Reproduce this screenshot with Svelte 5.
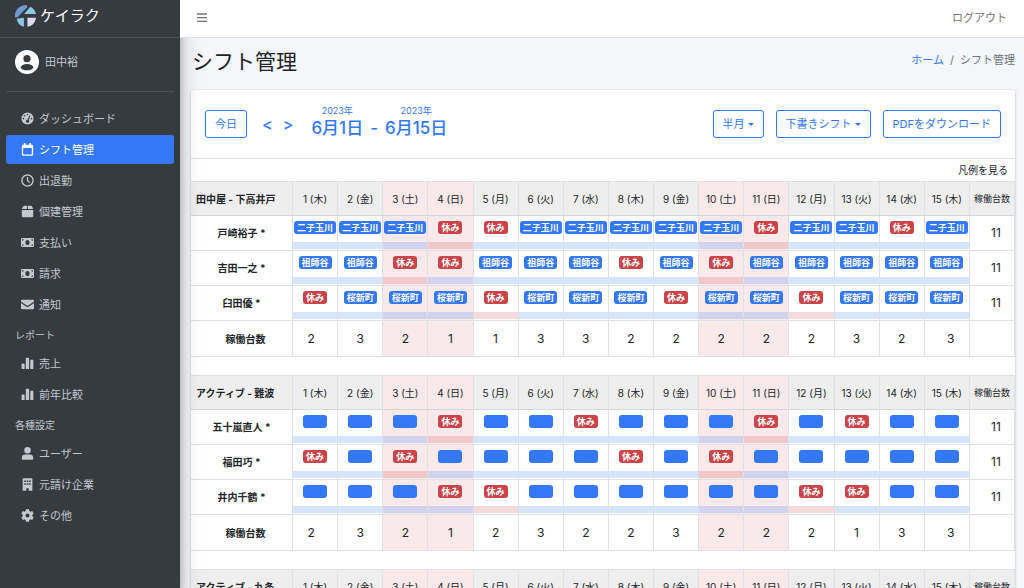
<script>
  const icons = {
    gauge: 'M8 .5a7.5 7.5 0 1 0 0 15 7.5 7.5 0 0 0 0-15zM8 2a1 1 0 1 1 0 2 1 1 0 0 1 0-2zM4.4 3.6a1 1 0 1 1 0 2 1 1 0 0 1 0-2zM3 7.2a1 1 0 1 1 0 2 1 1 0 0 1 0-2zM13 7.2a1 1 0 1 1 0 2 1 1 0 0 1 0-2zM10.6 4l1.1.6-2.2 5.2a2 2 0 1 1-1.3-.5z',
    calendar: 'M3.500 0h2.200v2h4.600V0h2.200v2h.8A1.700 1.700 0 0 1 15 3.700v10.300a1.700 1.700 0 0 1-1.700 1.700H2.700A1.700 1.700 0 0 1 1 14V3.700A1.700 1.700 0 0 1 2.700 2h.8zM2.700 6v7.500a.5.5 0 0 0 .5.5h9.600a.5.5 0 0 0 .5-.5V6z',
    clock: 'M8 .3a7.700 7.700 0 1 0 0 15.400A7.700 7.700 0 0 0 8 .3zM8 2a6 6 0 1 1 0 12A6 6 0 0 1 8 2zM7.200 3.800h1.600v4l2.500 1.900-1 1.300-3.100-2.400z',
    box: 'M4 1h3.500v4H1l1.300-3A1.700 1.700 0 0 1 4 1zM8.500 1H12a1.700 1.700 0 0 1 1.700 1L15 5H8.500zM1 6h14v7.500a1.500 1.500 0 0 1-1.500 1.500h-11A1.500 1.500 0 0 1 1 13.500z',
    bill: 'M1.200 2.500h13.600A1.200 1.200 0 0 1 16 3.700v8.600a1.200 1.200 0 0 1-1.200 1.200H1.200A1.200 1.200 0 0 1 0 12.300V3.700a1.200 1.200 0 0 1 1.200-1.200zM8 4.800c-1.500 0-2.600 1.400-2.600 3.200s1.100 3.200 2.600 3.200 2.600-1.400 2.600-3.200S9.500 4.800 8 4.800zM1.300 3.900v2a2 2 0 0 0 2-2zM12.700 3.900a2 2 0 0 0 2 2v-2zM1.300 10.100v2h2a2 2 0 0 0-2-2zM14.700 10.100a2 2 0 0 0-2 2h2z',
    mail: 'M1.500 2.300h13A1.300 1.300 0 0 1 16 3.700v.7L9.400 9a2.400 2.400 0 0 1-2.800 0L0 4.400v-.7a1.300 1.300 0 0 1 1.500-1.400zM0 6l5.800 4.200a3.700 3.700 0 0 0 4.400 0L16 6v6.500a1.300 1.300 0 0 1-1.500 1.400h-13A1.300 1.300 0 0 1 0 12.500z',
    chart: 'M1.500 8h2.200a.8.8 0 0 1 .8.8V14a.8.8 0 0 1-.8.8H1.500a.8.8 0 0 1-.8-.8V8.800a.8.8 0 0 1 .8-.8zM6.700 1h2.500a.8.8 0 0 1 .8.8V14a.8.8 0 0 1-.8.8H6.700a.8.8 0 0 1-.8-.8V1.800a.8.8 0 0 1 .8-.8zM12.200 3.500h2.200a.8.8 0 0 1 .8.8V14a.8.8 0 0 1-.8.8h-2.200a.8.8 0 0 1-.8-.8V4.300a.8.8 0 0 1 .8-.8z',
    user: 'M8 0a4 4 0 1 1 0 8 4 4 0 0 1 0-8zM5.300 9.300h5.400a4.300 4.300 0 0 1 4.300 4.300v1.100a1 1 0 0 1-1 1H2a1 1 0 0 1-1-1v-1.100a4.300 4.300 0 0 1 4.300-4.300z',
    building: 'M3 .3h10a1 1 0 0 1 1 1V15a.8.8 0 0 1-.8.8H9.500V12.500h-3v3.300H2.800A.8.8 0 0 1 2 15V1.300a1 1 0 0 1 1-1zM4 3v1.800h2V3zM7 3v1.800h2V3zM10 3v1.800h2V3zM4 6.500v1.800h2V6.500zM7 6.500v1.800h2V6.500zM10 6.500v1.800h2V6.500z',
    gear: 'M6.200.3h3.600l.5 2.200 1.300.8 2.200-.7 1.800 3.100L13.900 7.200v1.600l1.700 1.500-1.800 3.100-2.200-.7-1.300.8-.5 2.200H6.200l-.5-2.200-1.300-.8-2.200.7L.4 10.300l1.700-1.500V7.200L.4 5.700l1.800-3.100 2.200.7 1.300-.8zM8 5.500a2.500 2.500 0 1 0 0 5 2.500 2.500 0 0 0 0-5z',
  };

  const menu = [
    {
      items: [
        { icon: 'gauge', label: 'ダッシュボード' },
        { icon: 'calendar', label: 'シフト管理', active: true },
        { icon: 'clock', label: '出退勤' },
        { icon: 'box', label: '個建管理' },
        { icon: 'bill', label: '支払い' },
        { icon: 'bill', label: '請求' },
        { icon: 'mail', label: '通知' },
      ],
    },
    {
      title: 'レポート',
      items: [
        { icon: 'chart', label: '売上' },
        { icon: 'chart', label: '前年比較' },
      ],
    },
    {
      title: '各種設定',
      items: [
        { icon: 'user', label: 'ユーザー' },
        { icon: 'building', label: '元請け企業' },
        { icon: 'gear', label: 'その他' },
      ],
    },
  ];

  // 2023-06-01 is a Thursday
  const weekdays = ['木', '金', '土', '日', '月', '火', '水'];
  const days = Array.from({ length: 15 }, (_, i) => {
    const weekday = weekdays[i % 7];
    return { day: i + 1, weekday, weekend: weekday === '土' || weekday === '日' };
  });

  // off: days without a shift, wish: days off the driver asked for
  const groups = [
    {
      name: '田中屋 - 下高井戸',
      drivers: [
        { name: '戸崎裕子', area: '二子玉川', off: [4, 5, 11, 14], wish: [4, 11] },
        { name: '吉田一之', area: '祖師谷', off: [3, 4, 8, 10], wish: [3, 10] },
        { name: '臼田優', area: '桜新町', off: [1, 5, 9, 12], wish: [5, 12] },
      ],
      totals: [2, 3, 2, 1, 1, 3, 3, 2, 2, 2, 2, 2, 3, 2, 3],
    },
    {
      name: 'アクティブ - 難波',
      drivers: [
        { name: '五十嵐直人', area: '', off: [4, 7, 11, 13], wish: [4, 11] },
        { name: '福田巧', area: '', off: [1, 3, 8, 10], wish: [3, 10] },
        { name: '井内千鶴', area: '', off: [4, 5, 12, 13], wish: [5, 12] },
      ],
      totals: [2, 3, 2, 1, 2, 3, 2, 2, 3, 2, 2, 2, 1, 3, 3],
    },
    { name: 'アクティブ - 九条', drivers: [], totals: [] },
  ];
</script>

<div class="app">
  <aside class="sidebar">
    <a class="brand" href="/">
      <svg class="logo" viewBox="0 0 64 66" aria-hidden="true">
        <path fill="#7397cf" d="M0 37A33 33 0 0 1 37 0v6L8 37z" />
        <path fill="#8cc9e6" d="M47 5A33 33 0 0 1 64 27H28z" />
        <path fill="#8cc9e6" d="M5 41l22-3v28A33 33 0 0 1 5 41z" />
        <path fill="#dcd9ee" d="M38 38h26a33 33 0 0 1-26 28z" />
      </svg>
      <span>ケイラク</span>
    </a>
    <div class="user">
      <svg class="avatar" viewBox="0 0 24 24" aria-hidden="true">
        <circle cx="12" cy="12" r="12" fill="#fff" />
        <circle cx="12" cy="8.700" r="3.600" fill="#363b3f" />
        <ellipse cx="12" cy="17.200" rx="6.200" ry="3.100" fill="#363b3f" />
      </svg>
      <a href="/profile">田中裕</a>
    </div>
    <nav>
      {#each menu as section}
        {#if section.title}
          <h2>{section.title}</h2>
        {/if}
        <ul>
          {#each section.items as item}
            <li>
              <a class="nav-link" class:active={item.active} href="#top">
                <svg class="icon" viewBox="0 0 16 16" aria-hidden="true">
                  <path fill="currentColor" fill-rule="evenodd" d={icons[item.icon]} />
                </svg>
                {item.label}
              </a>
            </li>
          {/each}
        </ul>
      {/each}
    </nav>
  </aside>

  <div class="main">
    <header class="topbar">
      <button class="burger" aria-label="メニュー">
        <svg viewBox="0 0 10 10" aria-hidden="true">
          <path stroke="currentColor" stroke-width="1.300" d="M0 1h10M0 4.700h10M0 8.400h10" />
        </svg>
      </button>
      <a class="logout" href="/logout">ログアウト</a>
    </header>

    <main>
      <div class="page-head">
        <h1>シフト管理</h1>
        <div class="crumbs">
          <a href="/">ホーム</a>
          <span>/</span>
          <span>シフト管理</span>
        </div>
      </div>

      <section class="card">
        <div class="toolbar">
          <button class="btn">今日</button>
          <div class="arrows">
            <button class="arrow">&lt;</button>
            <button class="arrow">&gt;</button>
          </div>
          <div class="range">
            <div class="date"><small>2023年</small>6月1日</div>
            <span>-</span>
            <div class="date"><small>2023年</small>6月15日</div>
          </div>
          <div class="actions">
            <button class="btn">半月<i class="caret"></i></button>
            <button class="btn">下書きシフト<i class="caret"></i></button>
            <button class="btn">PDFをダウンロード</button>
          </div>
        </div>

        <div class="legend"><a href="#legend">凡例を見る</a></div>

        {#each groups as group}
          <table>
            <colgroup>
              <col class="name-col" />
              <col span="16" />
            </colgroup>
            <thead>
              <tr>
                <th class="group">{group.name}</th>
                {#each days as d}
                  <th class:weekend={d.weekend}>{d.day} ({d.weekday})</th>
                {/each}
                <th class="count-head">稼働台数</th>
              </tr>
            </thead>
            <tbody>
              {#each group.drivers as driver}
                <tr>
                  <th>{driver.name} *</th>
                  {#each days as d}
                    {@const off = driver.off.includes(d.day)}
                    <td class="shift" class:weekend={d.weekend}>
                      <span class="badge" class:off>{off ? '休み' : driver.area}</span>
                      <div class="bar" class:wish={driver.wish.includes(d.day)}></div>
                    </td>
                  {/each}
                  <td class="count">11</td>
                </tr>
              {/each}
            </tbody>
            {#if group.totals.length}
              <tfoot>
                <tr>
                  <th>稼働台数</th>
                  {#each group.totals as total, i}
                    <td class:weekend={days[i].weekend}>{total}</td>
                  {/each}
                  <td></td>
                </tr>
              </tfoot>
            {/if}
          </table>
        {/each}
      </section>
    </main>
  </div>
</div>

<style>
  :global(body) {
    margin: 0;
    background: #f4f6f9;
  }

  .app {
    display: flex;
    height: 100vh;
    overflow: hidden;
    font-family: Inter, 'Noto Sans CJK JP', sans-serif;
    font-size: 11px;
    line-height: 16px;
    color: #212529;
  }

  * {
    box-sizing: border-box;
  }

  a {
    color: inherit;
    text-decoration: none;
  }

  button {
    padding: 0;
    border: 0;
    background: none;
    font: inherit;
    color: inherit;
  }

  /* sidebar */
  .sidebar {
    position: relative;
    z-index: 1;
    flex: 0 0 180px;
    background: #363b3f;
    color: #c2c7d0;
    box-shadow: 0 10px 20px rgba(0, 0, 0, 0.25), 0 7px 7px rgba(0, 0, 0, 0.22);
  }

  .brand {
    display: flex;
    align-items: center;
    gap: 4px;
    height: 38px;
    padding: 0 15px 6px;
    border-bottom: 1px solid #4b5055;
    font-size: 15px;
    color: #fff;
  }

  .logo {
    width: 21px;
    height: 22px;
  }

  .user {
    display: flex;
    align-items: center;
    gap: 6px;
    height: 54px;
    margin: 0 6px 12px;
    padding: 0 9px 6px;
    border-bottom: 1px solid #4b5055;
  }

  .avatar {
    width: 24px;
    height: 24px;
  }

  ul {
    margin: 0;
    padding: 0 6px;
    list-style: none;
  }

  li {
    padding-bottom: 2px;
  }

  .nav-link {
    display: flex;
    align-items: center;
    gap: 5px;
    height: 29px;
    padding: 0 15px;
    border-radius: 3px;
  }

  .nav-link.active {
    background: #3478f6;
    color: #fff;
  }

  .icon {
    width: 13px;
    height: 13px;
  }

  h2 {
    margin: 0;
    padding: 0 15px;
    font-size: 10px;
    font-weight: 400;
    line-height: 28px;
  }

  /* page */
  .main {
    flex: 1;
    min-width: 0;
  }

  .topbar {
    position: relative;
    z-index: 2;
    display: flex;
    align-items: center;
    justify-content: space-between;
    height: 38px;
    padding: 0 17px 2px;
    border-bottom: 1px solid #dee2e6;
    background: #fff;
    color: #737373;
  }

  .burger {
    width: 10px;
    height: 10px;
  }

  .burger svg {
    display: block;
  }

  .page-head {
    display: flex;
    justify-content: space-between;
    height: 52px;
    padding: 9px 9px 0 12px;
  }

  h1 {
    margin: 0;
    font-size: 21px;
    font-weight: 400;
    line-height: 30px;
  }

  .crumbs {
    display: flex;
    gap: 6px;
    padding-top: 5px;
    color: #6c757d;
  }

  .crumbs a {
    color: #3478f6;
  }

  .card {
    margin: 0 9px 0 11px;
    border-radius: 3px;
    background: #fff;
    box-shadow: 0 0 1px rgba(0, 0, 0, 0.13), 0 1px 3px rgba(0, 0, 0, 0.2);
  }

  .toolbar {
    display: flex;
    align-items: center;
    height: 69px;
    padding: 0 14px;
    border-bottom: 1px solid #dee2e6;
    color: #3478f6;
  }

  .btn {
    display: flex;
    align-items: center;
    height: 28px;
    padding: 0 9px;
    border: 1px solid #3478f6;
    border-radius: 3px;
  }

  .caret {
    margin-left: 3px;
    border: 3px solid transparent;
    border-top-color: currentColor;
    border-bottom: 0;
  }

  .arrows {
    display: flex;
    gap: 10px;
    margin-left: 15px;
    font-size: 16px;
    font-weight: 500;
  }

  .range {
    display: flex;
    align-items: flex-end;
    gap: 7px;
    margin-left: 18px;
    padding-bottom: 4px;
    font-size: 17px;
    font-weight: 500;
    line-height: 22px;
  }

  .date small {
    display: block;
    font-size: 9px;
    font-weight: 400;
    line-height: 12px;
    text-align: center;
  }

  .actions {
    display: flex;
    gap: 12px;
    margin-left: auto;
  }

  .legend {
    padding: 3px 7px;
    font-size: 10px;
    text-align: right;
  }

  /* shift tables */
  table {
    width: 100%;
    margin-bottom: 18px;
    border-spacing: 0;
    table-layout: fixed;
  }

  .name-col {
    width: 102px;
  }

  th,
  td {
    height: 35px;
    padding: 0;
    border-right: 1px solid #dee2e6;
    border-bottom: 1px solid #dee2e6;
    text-align: center;
    white-space: nowrap;
  }

  td {
    font-size: 12px;
  }

  th {
    font-size: 10px;
  }

  thead th {
    border-top: 1px solid #dee2e6;
    border-bottom-color: #d3d8dc;
    background: #eee;
    font-weight: 400;
  }

  thead .group {
    padding-left: 5px;
    font-weight: 700;
    text-align: left;
  }

  thead .count-head {
    font-size: 9px;
  }

  .weekend,
  thead .weekend {
    background: #f9e9ea;
  }

  .shift {
    padding-top: 5px;
    vertical-align: top;
  }

  .badge {
    display: block;
    width: fit-content;
    min-width: 24px;
    height: 13px;
    margin: 0 auto 8px;
    padding: 0 3px;
    border-radius: 3px;
    background: #3478f6;
    font-size: 9px;
    font-weight: 700;
    line-height: 13px;
    color: #fff;
  }

  .badge.off {
    background: #cb444a;
  }

  .bar {
    height: 7px;
    background: rgba(52, 120, 246, 0.2);
  }

  .bar.wish {
    background: rgba(203, 68, 74, 0.2);
  }

  .count,
  tfoot th {
    padding-left: 8px;
  }

  tfoot th,
  tfoot td {
    height: 36px;
  }

  tfoot td:nth-child(2) {
    padding-right: 8px;
  }

  tfoot td:nth-last-child(2) {
    padding-left: 8px;
  }
</style>
